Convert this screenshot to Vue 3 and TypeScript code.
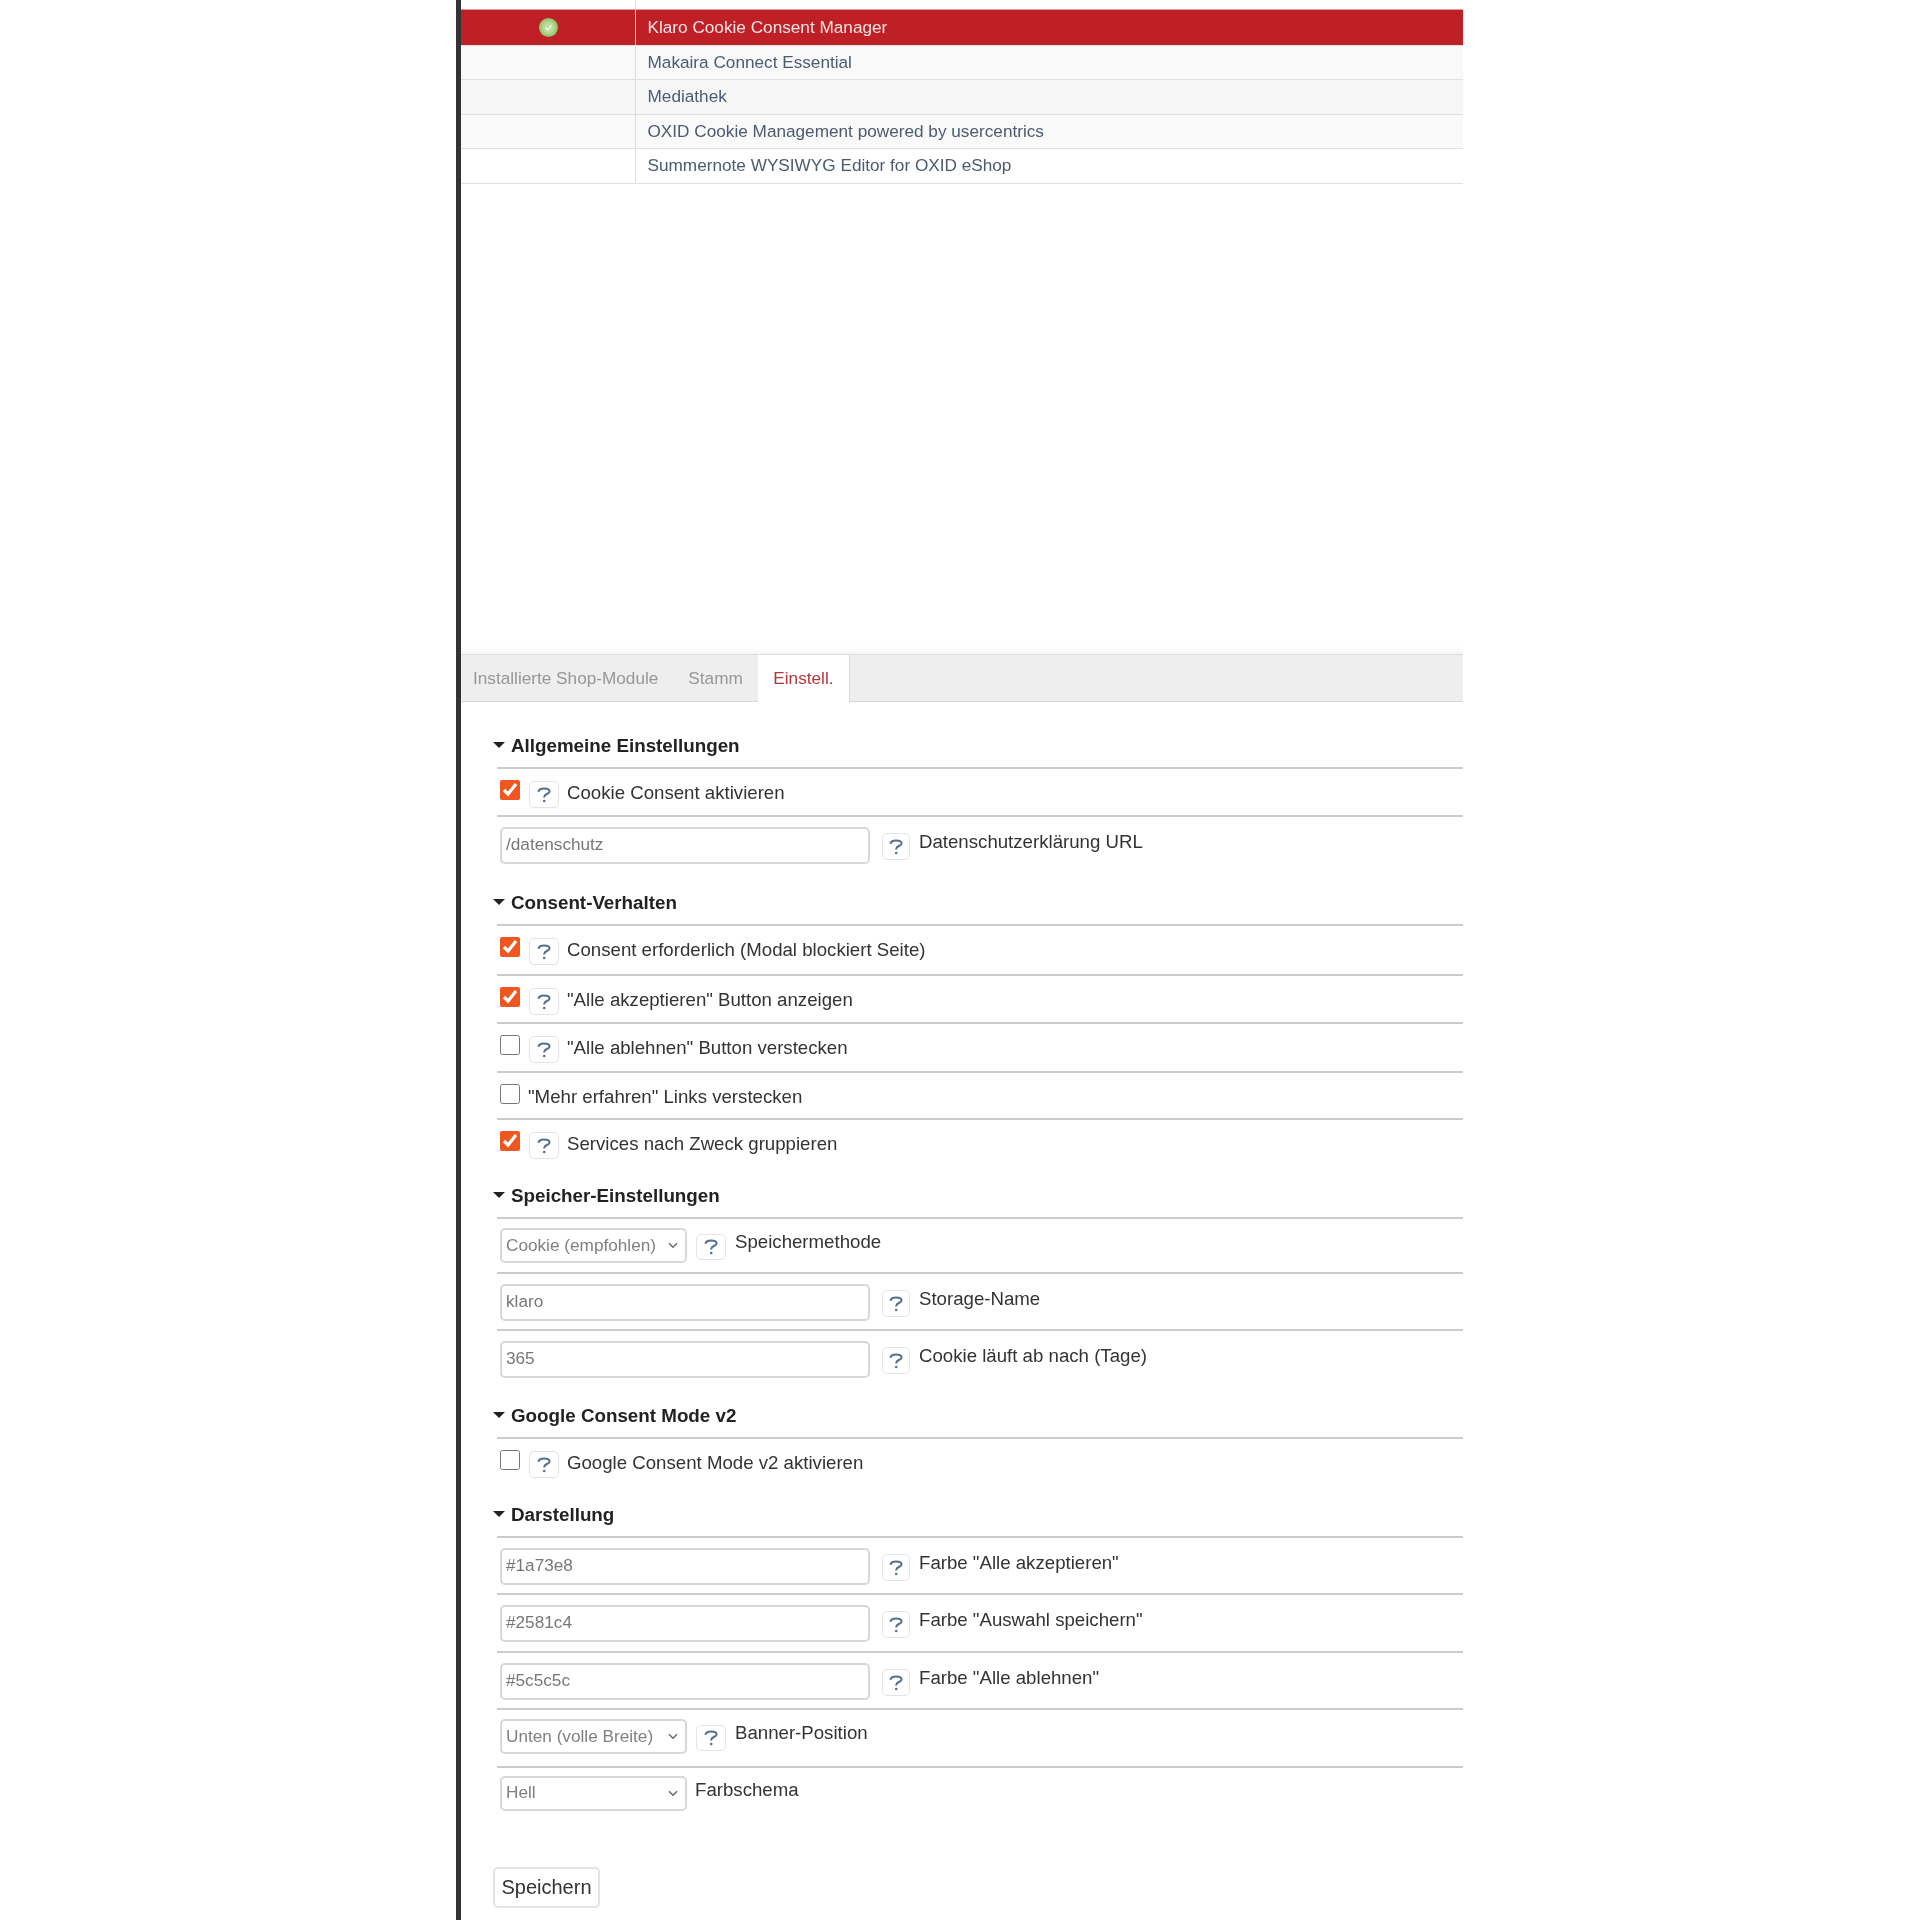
<script setup lang="ts">
type Row = { kind: 'check' | 'input' | 'select'; label: string; value?: string; checked?: boolean; help?: boolean; h: number };
type Section = { title: string; rows: Row[] };

const modules = [
  { name: 'Klaro Cookie Consent Manager', active: true, tone: 'selected' },
  { name: 'Makaira Connect Essential', active: false, tone: 'a' },
  { name: 'Mediathek', active: false, tone: 'b' },
  { name: 'OXID Cookie Management powered by usercentrics', active: false, tone: 'a' },
  { name: 'Summernote WYSIWYG Editor for OXID eShop', active: false, tone: 'c' },
];

const sections: Section[] = [
  { title: 'Allgemeine Einstellungen', rows: [
    { kind: 'check', label: 'Cookie Consent aktivieren', checked: true, help: true, h: 48 },
    { kind: 'input', label: 'Datenschutzerklärung URL', value: '/datenschutz', help: true, h: 57 },
  ] },
  { title: 'Consent-Verhalten', rows: [
    { kind: 'check', label: 'Consent erforderlich (Modal blockiert Seite)', checked: true, help: true, h: 50 },
    { kind: 'check', label: '"Alle akzeptieren" Button anzeigen', checked: true, help: true, h: 48 },
    { kind: 'check', label: '"Alle ablehnen" Button verstecken', help: true, h: 49 },
    { kind: 'check', label: '"Mehr erfahren" Links verstecken', h: 47 },
    { kind: 'check', label: 'Services nach Zweck gruppieren', checked: true, help: true, h: 47 },
  ] },
  { title: 'Speicher-Einstellungen', rows: [
    { kind: 'select', label: 'Speichermethode', value: 'Cookie (empfohlen)', help: true, h: 55 },
    { kind: 'input', label: 'Storage-Name', value: 'klaro', help: true, h: 57 },
    { kind: 'input', label: 'Cookie läuft ab nach (Tage)', value: '365', help: true, h: 56 },
  ] },
  { title: 'Google Consent Mode v2', rows: [
    { kind: 'check', label: 'Google Consent Mode v2 aktivieren', help: true, h: 47 },
  ] },
  { title: 'Darstellung', rows: [
    { kind: 'input', label: 'Farbe "Alle akzeptieren"', value: '#1a73e8', help: true, h: 57 },
    { kind: 'input', label: 'Farbe "Auswahl speichern"', value: '#2581c4', help: true, h: 58 },
    { kind: 'input', label: 'Farbe "Alle ablehnen"', value: '#5c5c5c', help: true, h: 57 },
    { kind: 'select', label: 'Banner-Position', value: 'Unten (volle Breite)', help: true, h: 58 },
    { kind: 'select', label: 'Farbschema', value: 'Hell', h: 55 },
  ] },
];
</script>

<template>
  <div class="page">
    <main class="panel">
      <div class="list">
        <div class="mod-row tone-c cut">
          <div class="mod-state"></div>
          <div class="mod-name"><a>Invoice by OXID</a></div>
        </div>
        <div v-for="m in modules" :key="m.name" class="mod-row" :class="'tone-' + m.tone">
          <div class="mod-state">
            <span v-if="m.active" class="dot">
              <svg width="9" height="9" viewBox="0 0 9 9"><path d="M1.5 4.5 3.7 6.8 7.6 2.2" fill="none" stroke="#f2f8ea" stroke-width="1.6"/></svg>
            </span>
          </div>
          <div class="mod-name"><a>{{ m.name }}</a></div>
        </div>
      </div>

      <nav class="tabs">
        <a class="tab">Installierte Shop-Module</a>
        <a class="tab">Stamm</a>
        <a class="tab current">Einstell.</a>
      </nav>

      <form class="settings" @submit.prevent>
        <section v-for="s in sections" :key="s.title" class="group">
          <h3 class="group-title"><span class="caret"></span>{{ s.title }}</h3>
          <div v-for="r in s.rows" :key="r.label" class="row" :class="'row-' + r.kind" :style="{ height: r.h + 'px' }">
            <input v-if="r.kind === 'check'" class="check" type="checkbox" :checked="r.checked" />
            <input v-else-if="r.kind === 'input'" class="text" type="text" :value="r.value" />
            <div v-else class="select-wrap">
              <select class="select"><option>{{ r.value }}</option></select>
              <svg class="chevron" width="10" height="7" viewBox="0 0 10 7"><path d="M1 1.2 5 5.2 9 1.2" fill="none" stroke="#666" stroke-width="1.4"/></svg>
            </div>
            <button v-if="r.help" class="help" type="button" aria-label="Hilfe">
              <svg width="14" height="16" viewBox="0 0 14 16"><path d="M1.4 4.8C1.9 2.2 4.2 1.4 7 1.4c3 0 5.6 1 5.6 3 0 2.4-5 2.3-5.4 5.4v.8" fill="none" stroke="#55708f" stroke-width="2"/><circle cx="7.2" cy="14" r="1.3" fill="#55708f"/></svg>
            </button>
            <label class="label">{{ r.label }}</label>
          </div>
        </section>
        <button class="save" type="submit">Speichern</button>
      </form>
    </main>
  </div>
</template>

<style scoped>
.page {
  width: 1920px;
  height: 1920px;
  overflow: hidden;
  background: #fff;
  font-family: "Liberation Sans", Arial, sans-serif;
  filter: blur(0.7px);
}
.panel {
  margin-left: 456px;
  width: 1007px;
  height: 1920px;
  border-left: 5px solid #333;
  box-sizing: border-box;
}
.list {
  display: flow-root;
  height: 654px;
  background: linear-gradient(#fff calc(100% - 8px), #f6f6f6);
}
.mod-row {
  display: flex;
  height: 33.5px;
  border-bottom: 1.5px solid #e0e0e0;
  box-sizing: content-box;
}
.cut { margin-top: -25px; }
.mod-state {
  width: 174px;
  display: flex;
  align-items: center;
  justify-content: center;
  border-right: 1.5px solid #ddd;
}
.mod-name {
  flex: 1;
  padding-left: 11.5px;
  display: flex;
  align-items: center;
  font-size: 17.2px;
  color: #4c5b70;
}
.tone-a { background: #f9f9f9; }
.tone-b { background: #f6f6f6; }
.tone-c { background: #fff; }
.tone-selected { height: 35px; background: #bf2026; border-top: 1px solid #d8a0a0; margin-top: -1px; }
.tone-selected .mod-name { color: #f6e4e4; }
.tone-selected .mod-state { border-right-color: #eccfcf; }
.dot {
  width: 19px;
  height: 19px;
  border-radius: 50%;
  background: radial-gradient(circle, #b9dc9a 0 35%, #8fbf62 70%, #7da95a);
  display: flex;
  align-items: center;
  justify-content: center;
}
.tabs {
  display: flex;
  height: 48px;
  background: #eee;
  border-top: 1px solid #ddd;
  border-bottom: 1.5px solid #d8d8d8;
  box-sizing: border-box;
}
.tab {
  padding: 0 15px 0 12px;
  font-size: 17.2px;
  line-height: 46px;
  color: #979797;
}
.tab:nth-child(2) { padding-left: 15px; }
.tab.current {
  background: #fff;
  color: #b5363c;
  margin-bottom: -1.5px;
  border-right: 1.5px solid #d8d8d8;
  padding: 0 15.5px;
}
.settings { padding: 21px 0 0 32px; }
.group-title {
  margin: 0;
  height: 44px;
  padding: 12px 0 0;
  box-sizing: border-box;
  font-size: 18.8px;
  line-height: 22px;
  font-weight: 700;
  color: #222;
  display: flex;
  gap: 6px;
}
.caret {
  width: 0;
  height: 0;
  margin: 7px 0 0 0;
  border: 6px solid transparent;
  border-top: 6px solid #222;
  border-bottom: 0;
}
.group { margin-bottom: 8px; }
.row {
  display: flex;
  align-items: flex-start;
  margin-left: 4px;
  padding-left: 3px;
  border-top: 2px solid #ccc;
  box-sizing: border-box;
  font-size: 18.65px;
  color: #333;
}
.check {
  width: 20px;
  height: 20px;
  margin: 10.5px 9px 0 0;
  accent-color: #f0561f;
}
.check + .label { margin-left: -1px; }
.help {
  width: 30px;
  height: 27px;
  padding: 0;
  margin: 12px 8px 0 0;
  background: #fff;
  border: 1.5px solid #e4e4e4;
  border-radius: 5px;
  display: flex;
  align-items: center;
  justify-content: center;
}
.label { line-height: 24px; margin-top: 12px; }
.row-input .text {
  width: 370px;
  height: 37px;
  margin: 9.5px 12px 0 0;
  padding: 0 4px 2px;
  box-sizing: border-box;
  border: 2px solid #d8d8d8;
  border-radius: 5px;
  font: 17.2px "Liberation Sans", Arial, sans-serif;
  color: #777;
  outline: 0;
}
.row-input .help { width: 28px; margin: 16px 9px 0 0; }
.row-input .label { margin-top: 12.5px; }
.select-wrap {
  position: relative;
  width: 187px;
  margin: 9px 9px 0 0;
}
.select {
  appearance: none;
  display: block;
  width: 100%;
  height: 35px;
  padding: 0 4px 2px;
  box-sizing: border-box;
  background: #fff;
  border: 2px solid #d8d8d8;
  border-radius: 5px;
  font: 17.2px "Liberation Sans", Arial, sans-serif;
  color: #808080;
}
.chevron {
  position: absolute;
  right: 9px;
  top: 14px;
}
.row-select .help { height: 26px; margin: 15px 9px 0 0; }
.row-select .label { margin-top: 11px; }
.row-select:last-child .select-wrap { margin-top: 7.5px; margin-right: 8px; }
.row-select:last-child .label { margin-top: 9.5px; }
.save {
  display: block;
  margin: 46px 0 0 0;
  width: 107px;
  height: 41px;
  padding: 0;
  background: #fff;
  border: 2px solid #e4e4e4;
  border-radius: 5px;
  font: 20px "Liberation Sans", Arial, sans-serif;
  color: #333;
}
</style>
